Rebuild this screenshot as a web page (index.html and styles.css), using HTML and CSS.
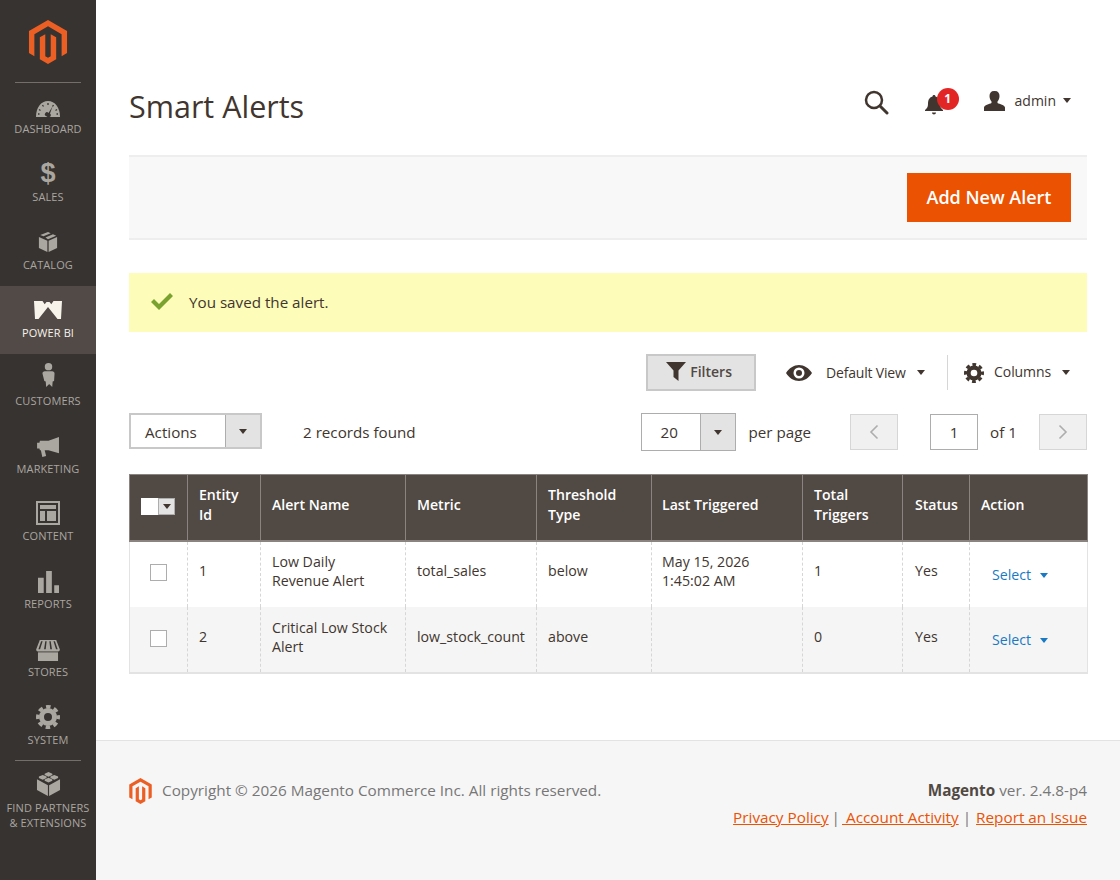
FILE: index.html
```html
<!DOCTYPE html>
<html lang="en">
  <head>
    <meta charset="UTF-8" />
    <title>Smart Alerts / Magento Admin</title>
    <link rel="stylesheet" href="styles.css">
  </head>
  <body>
    <nav class="menu">
      <a class="menu-logo" href="#">
        <svg width="40" height="44" viewBox="1.6 0 20.8 24"><path fill="#eb5f24" d="M12 24l-4.455-2.572v-12l2.97-1.715v12.001l1.485.902 1.485-.902V7.713l2.971 1.715v12L12 24zM22.391 6v12l-2.969 1.714V7.713L12 3.43 4.574 7.713v12L1.609 18V6L12 0l10.391 6z"/></svg>
      </a>
      <ul class="menu-list">
        <li class="menu-item short">
          <svg class="menu-icon" width="24" height="16" viewBox="0 0 24 16"><path d="M0 16C0 6.500 5 0 12 0s12 6.500 12 16z"/><path fill="none" stroke="#373330" stroke-width="1.300" d="M12 2v2M6.500 4l1 1.500M17.500 4l-1 1.500M3 8.500l1.500 1M21 8.500l-1.500 1M2 13h1.500M22 13h-1.500"/><path fill="#373330" d="M16.500 5.500l-4 6.500a2 2 0 1 0-2.500 3l1.500 1h2a2 2 0 0 0 .5-3.500z"/></svg>
          <span class="menu-label">Dashboard</span>
        </li>
        <li class="menu-item">
          <span class="menu-icon dollar">$</span>
          <span class="menu-label">Sales</span>
        </li>
        <li class="menu-item">
          <svg class="menu-icon" width="20" height="22" viewBox="0 0 22 24"><path d="M11 1l3 1.300-8 3.500-3.500-1.500zM16.500 3.400L20 5 11 9 8.200 7zM1 6.500l9.300 4V23L1 18.500zM21 6.500v12L11.700 23V10.500z"/></svg>
          <span class="menu-label">Catalog</span>
        </li>
        <li class="menu-item active">
          <svg class="menu-icon bi" width="28" height="18" viewBox="0 0 28 18"><path d="M0 0h8.500l2.200 3.200L12.500 1h3l1.800 2.200L19.500 0H28l-1 18h-3.500L14 6 4.500 18H1z"/></svg>
          <span class="menu-label">Power BI</span>
        </li>
        <li class="menu-item">
          <svg class="menu-icon customer" width="13" height="26" viewBox="0 0 14 27"><circle cx="7" cy="4.500" r="4"/><path d="M3 9.500h8c1.500 0 2.500 1 2.500 2.500l-.5 8-1.500.5-.5 6-3-3-.5 0-3 3-.5-6-1.500-.5L.500 12C.500 10.500 1.500 9.500 3 9.500z"/></svg>
          <span class="menu-label">Customers</span>
        </li>
        <li class="menu-item">
          <svg class="menu-icon" width="23" height="20" viewBox="0 0 24 21"><path d="M23 0v17L12 14H8l1.500 6-4 1L4 14H3l-.5-2H0V6h2.500L3 4h9z"/></svg>
          <span class="menu-label">Marketing</span>
        </li>
        <li class="menu-item short">
          <svg class="menu-icon tight" width="24" height="24" viewBox="0 0 24 24"><path fill-rule="evenodd" d="M0 0h24v24H0zM2 2v20h20V2zM4 4h16v4H4zM4 10h5v10H4zM11 10h9v10h-9z"/></svg>
          <span class="menu-label">Content</span>
        </li>
        <li class="menu-item">
          <svg class="menu-icon tight" width="21" height="22" viewBox="0 0 22 23"><path d="M0 7h6v16H0zM8.500 0h6v23h-6zM17 15h5v8h-5z"/></svg>
          <span class="menu-label">Reports</span>
        </li>
        <li class="menu-item">
          <svg class="menu-icon tight" width="26" height="21" viewBox="0 0 26 23"><path fill-rule="evenodd" d="M4 0h18l4 10.500c0 1.500-1 2-2 2H2c-1 0-2-.5-2-2zM5.500 1.500L2.500 10h1.800l2.800-8.500zM10 1.500L8.700 10h1.800l1-8.500zM14.500 1.500l1 8.500h1.800L16 1.500zM19 1.500l2.800 8.500h1.800l-3-8.500z"/><path d="M2 13.500h22V23H2z"/></svg>
          <span class="menu-label">Stores</span>
        </li>
        <li class="menu-item">
          <svg class="menu-icon gear tight" width="24" height="24" viewBox="0 0 24 24"><circle cx="12" cy="12" r="6.500" fill="none" stroke-width="5"/><circle cx="12" cy="12" r="10.200" fill="none" stroke-width="3.600" stroke-dasharray="4.500 3.510" stroke-dashoffset="2.250"/></svg>
          <span class="menu-label">System</span>
        </li>
        <li class="menu-item partners">
          <svg class="menu-icon" width="25" height="24" viewBox="0 0 26 25"><path d="M13 0l4 1.800v1.400l-4 1.800-4-1.800V1.800zM7 3l4 1.800v1.400L7 8 3 6.200V4.800zM19 3l4 1.800v1.400L19 8l-4-1.800V4.800zM13 6l4 1.800v1.400L13 11 9 9.200V7.800zM1 7.500l11.400 6.300V25L1 18.700zM25 7.500v11.200L13.600 25V13.800l3-1.600z"/></svg>
          <span class="menu-label">Find Partners<br>&amp; Extensions</span>
        </li>
      </ul>
    </nav>

    <div class="page">
      <main class="content">
        <header class="page-header">
          <h1>Smart Alerts</h1>
          <div class="header-tools">
            <svg class="search-icon" width="26" height="26" viewBox="0 0 26 26"><circle cx="11" cy="11" r="8" fill="none" stroke="#41362f" stroke-width="2.500"/><path d="M17 17l7 7" stroke="#41362f" stroke-width="3" stroke-linecap="round"/></svg>
            <div class="notice">
              <svg width="20" height="22" viewBox="0 0 20 22"><path fill="#41362f" d="M10 1c1 0 1.500.7 1.500 1.500C15 3.500 16 6.500 16 10c0 3 1 4.500 3 6v1H1v-1c2-1.500 3-3 3-6 0-3.500 1-6.500 4.500-7.500C8.500 1.700 9 1 10 1zM8 18.500h4c0 1.200-.9 2-2 2s-2-.8-2-2z"/></svg>
              <span class="badge">1</span>
            </div>
            <div class="user">
              <svg width="22" height="20" viewBox="0 0 22 20"><path fill="#41362f" d="M11 0c3 0 4.500 2 4.500 5 0 2.500-1 4.500-2 5.500v1.500c2 1 7.500 2 7.500 4.500V20H0v-3.500C0 14 5.500 13 7.500 12v-1.500c-1-1-2-3-2-5.500 0-3 1.500-5 4.500-5z"/></svg>
              <span class="user-name">admin</span>
              <span class="caret"></span>
            </div>
          </div>
        </header>

        <div class="page-actions">
          <button class="primary-btn">Add New Alert</button>
        </div>

        <div class="message">
          <svg width="22" height="17" viewBox="0 0 22 17"><path fill="#79a22e" d="M0 9l3-3 5 5L19 0l3 3L8 17z"/></svg>
          <span>You saved the alert.</span>
        </div>

        <div class="grid-tools">
          <button class="filters-btn">
            <svg width="20" height="19" viewBox="0 0 20 19"><path fill="#41362f" d="M0 0h20l-7.500 8.500V19l-5-4V8.500z"/></svg>
            Filters
          </button>
          <div class="view-switch">
            <svg width="26" height="16" viewBox="0 0 26 16"><path fill="#41362f" fill-rule="evenodd" d="M0 8c3-5 8-8 13-8s10 3 13 8c-3 5-8 8-13 8S3 13 0 8zM13 2.500a5.500 5.500 0 1 0 0 11 5.500 5.500 0 0 0 0-11zM13 5a3 3 0 1 1 0 6 3 3 0 0 1 0-6z"/></svg>
            <span class="view-label">Default View</span>
            <span class="caret"></span>
          </div>
          <div class="columns-switch">
            <svg class="gear-dark" width="20" height="20" viewBox="0 0 24 24"><circle cx="12" cy="12" r="6.500" fill="none" stroke-width="5"/><circle cx="12" cy="12" r="10.200" fill="none" stroke-width="3.600" stroke-dasharray="4.500 3.510" stroke-dashoffset="2.250"/></svg>
            <span class="columns-label">Columns</span>
            <span class="caret"></span>
          </div>
        </div>

        <div class="grid-pager">
          <div class="select actions-select">
            <span class="select-value">Actions</span>
            <span class="select-arrow"><span class="caret"></span></span>
          </div>
          <span class="records">2 records found</span>
          <div class="select size-select">
            <span class="select-value">20</span>
            <span class="select-arrow"><span class="caret"></span></span>
          </div>
          <span class="per-page">per page</span>
          <button class="page-btn prev">
            <svg width="10" height="16" viewBox="0 0 10 16"><path d="M8.500 1.500L2 8l6.500 6.500" fill="none" stroke="#adadad" stroke-width="1.600"/></svg>
          </button>
          <span class="page-input">1</span>
          <span class="page-total">of 1</span>
          <button class="page-btn next">
            <svg width="10" height="16" viewBox="0 0 10 16"><path d="M1.500 1.500L8 8l-6.500 6.500" fill="none" stroke="#adadad" stroke-width="1.600"/></svg>
          </button>
        </div>

        <table class="data-grid">
          <colgroup>
            <col class="col-check"><col class="col-id"><col class="col-name"><col class="col-metric"><col class="col-type">
            <col class="col-last"><col class="col-total"><col class="col-status"><col class="col-action">
          </colgroup>
          <thead>
            <tr>
              <th><div class="head-check"><span class="head-box"></span><span class="head-arrow"><span class="caret small"></span></span></div></th>
              <th>Entity<br>Id</th>
              <th>Alert Name</th>
              <th>Metric</th>
              <th>Threshold<br>Type</th>
              <th class="last-col">Last Triggered</th>
              <th>Total<br>Triggers</th>
              <th class="status-col">Status</th>
              <th>Action</th>
            </tr>
          </thead>
          <tbody>
            <tr>
              <td class="check-cell"><span class="checkbox"></span></td>
              <td>1</td>
              <td>Low Daily<br>Revenue Alert</td>
              <td>total_sales</td>
              <td>below</td>
              <td class="last-col">May 15, 2026<br>1:45:02 AM</td>
              <td>1</td>
              <td class="status-col">Yes</td>
              <td class="action-cell"><a href="#">Select</a><span class="caret blue"></span></td>
            </tr>
            <tr class="even">
              <td class="check-cell"><span class="checkbox"></span></td>
              <td>2</td>
              <td>Critical Low Stock<br>Alert</td>
              <td>low_stock_count</td>
              <td>above</td>
              <td class="last-col"></td>
              <td>0</td>
              <td class="status-col">Yes</td>
              <td class="action-cell"><a href="#">Select</a><span class="caret blue"></span></td>
            </tr>
          </tbody>
        </table>
      </main>

      <footer class="footer">
        <div class="copyright">
          <svg width="23" height="26" viewBox="1.6 0 20.800 24"><path fill="#eb5f24" d="M12 24l-4.455-2.572v-12l2.97-1.715v12.001l1.485.902 1.485-.902V7.713l2.971 1.715v12L12 24zM22.391 6v12l-2.969 1.714V7.713L12 3.43 4.574 7.713v12L1.609 18V6L12 0l10.391 6z"/></svg>
          <span>Copyright © 2026 Magento Commerce Inc. All rights reserved.</span>
        </div>
        <div class="footer-right">
          <div class="version"><strong>Magento</strong> ver. 2.4.8-p4</div>
          <div class="footer-links">
            <a href="#">Privacy Policy</a>
            <span class="pipe">|</span>
            <a href="#">&nbsp;Account Activity</a>
            <span class="pipe wide">|</span>
            <a href="#">Report an Issue</a>
          </div>
        </div>
      </footer>
    </div>
  </body>
</html>
```

FILE: styles.css
```css
* {
  box-sizing: border-box;
}
body {
  margin: 0;
  display: flex;
  min-height: 880px;
  font-family: "Open Sans", sans-serif;
  font-size: 14px;
  color: #41362f;
  background: #fff;
}
button {
  font-family: inherit;
  cursor: pointer;
}

/* left menu */
.menu {
  width: 96px;
  flex: none;
  background: #373330;
  color: #aaa6a0;
}
.menu-logo {
  display: block;
  margin: 0 15px;
  padding: 20px 0 18px;
  border-bottom: 1px solid #736e6a;
  text-align: center;
  height: 83px;
}
.menu-list {
  list-style: none;
  margin: 0;
  padding: 0;
}
.menu-item {
  height: 68px;
  display: flex;
  flex-direction: column;
  align-items: center;
  justify-content: flex-end;
  padding-bottom: 14px;
  font-size: 11px;
  line-height: 15px;
  text-transform: uppercase;
  text-align: center;
}
.menu-item.short {
  height: 67px;
}
.menu-icon {
  fill: #aaa6a0;
  margin-bottom: 4px;
}
.menu-icon.tight {
  margin-bottom: 3px;
}
.menu-icon.bi {
  margin-bottom: 6px;
  fill: #f7f3eb;
}
.menu-icon.customer {
  margin-bottom: 5px;
}
.menu-label {
  letter-spacing: 0.1px;
  white-space: nowrap;
}
.gear {
  stroke: #aaa6a0;
  fill: none;
}
.dollar {
  font-family: "Liberation Sans", sans-serif;
  font-size: 27px;
  line-height: 27px;
  font-weight: 700;
  margin-bottom: 2px;
}
.menu-item.active {
  background: #514a46;
  color: #f7f3eb;
}
.menu-item.partners {
  margin: -1px 15px 0;
  height: 76px;
  padding-bottom: 0;
  border-top: 1px solid #736e6a;
  justify-content: flex-start;
  padding-top: 11px;
}
.partners .menu-label {
  margin: 0 -15px;
}

/* page */
.page {
  flex: 1;
  display: flex;
  flex-direction: column;
  min-width: 0;
}
.content {
  flex: 1;
  padding: 0 33px 0 33px;
}
.page-header {
  height: 155px;
  display: flex;
  justify-content: space-between;
  align-items: flex-start;
  padding-top: 85px;
}
h1 {
  margin: 0;
  font-size: 30.5px;
  line-height: 42px;
  font-weight: 400;
  color: #41362f;
}
.header-tools {
  display: flex;
  align-items: center;
  padding-top: 3px;
  margin-right: 16px;
}
.search-icon {
  margin-top: -2px;
  margin-right: 35px;
}
.notice {
  position: relative;
  width: 20px;
  height: 24px;
  margin-top: 6px;
  margin-right: 40px;
}
.badge {
  position: absolute;
  left: 13px;
  top: -6px;
  width: 22px;
  height: 22px;
  border-radius: 50%;
  background: #e22626;
  color: #fff;
  font-size: 12px;
  font-weight: 700;
  line-height: 22px;
  text-align: center;
}
.user {
  display: flex;
  align-items: center;
  margin-top: -5px;
}
.user-name {
  margin: 0 7px 0 9px;
}
.caret {
  display: inline-block;
  width: 0;
  height: 0;
  border-style: solid;
  border-width: 5px 4.500px 0;
  border-color: #41362f transparent transparent;
}
.caret.small {
  border-width: 5px 4px 0;
}
.caret.blue {
  border-color: #1979c3 transparent transparent;
  margin-left: 9px;
  position: relative;
  top: -2px;
}

.page-actions {
  height: 85px;
  background: #f8f8f8;
  border-top: 2px solid #eeeeee;
  border-bottom: 2px solid #eeeeee;
  display: flex;
  justify-content: flex-end;
  align-items: center;
  padding-right: 16px;
}
.primary-btn {
  width: 164px;
  height: 49px;
  border: none;
  background: #eb5202;
  color: #fff;
  font-size: 18px;
  font-weight: 600;
  padding: 0 0 2px;
}

.message {
  margin-top: 33px;
  height: 59px;
  background: #fefcb9;
  display: flex;
  align-items: center;
  padding: 0 0 2px 22px;
  font-size: 15.2px;
  color: #41362f;
}
.message span {
  margin-left: 16px;
}

/* grid toolbar */
.grid-tools {
  margin-top: 22px;
  height: 37px;
  display: flex;
  align-items: center;
  justify-content: flex-end;
}
.filters-btn {
  width: 110px;
  height: 37px;
  display: flex;
  align-items: center;
  justify-content: center;
  gap: 4px;
  border: 2px solid #c8c8c8;
  background: #e3e3e3;
  color: #514943;
  font-size: 14px;
  font-weight: 600;
  padding: 0 4px 2px 0;
}
.view-switch {
  display: flex;
  align-items: center;
  margin-left: 30px;
  width: 161px;
}
.view-label {
  margin: 0 11px 0 14px;
  white-space: nowrap;
  letter-spacing: -0.2px;
}
.columns-switch {
  display: flex;
  align-items: center;
  border-left: 1px solid #d6d6d6;
  height: 35px;
  padding-left: 16px;
  padding-right: 17px;
}
.gear-dark {
  stroke: #41362f;
}
.columns-label {
  margin: -2px 11px 0 10px;
  letter-spacing: -0.1px;
}

.grid-pager {
  margin-top: 22px;
  height: 37px;
  display: flex;
  align-items: center;
  font-size: 15.2px;
}
.select {
  display: flex;
  align-self: flex-start;
  border: 1px solid #adadad;
  background: #fff;
}
.select-value {
  flex: 1;
  line-height: 36px;
}
.select-arrow {
  width: 35px;
  background: #e3e3e3;
  border-left: 1px solid #adadad;
  display: flex;
  align-items: center;
  justify-content: center;
}
.actions-select {
  width: 133px;
  height: 36px;
  border-width: 2px;
  border-color: #c8c8c8;
}
.actions-select .select-value {
  padding-left: 14px;
  line-height: 35px;
}
.records {
  margin-left: 41px;
}
.size-select {
  width: 95px;
  height: 38px;
  margin-left: auto;
}
.size-select .select-value {
  padding-left: 19px;
}
.per-page {
  margin-left: 13px;
}
.page-btn {
  width: 48px;
  height: 36px;
  border: 1px solid #d6d6d6;
  background: #f0f0f0;
  padding: 0;
  display: flex;
  align-items: center;
  justify-content: center;
}
.prev {
  margin-left: 39px;
}
.page-input {
  width: 48px;
  height: 36px;
  margin-left: 32px;
  border: 1px solid #adadad;
  text-align: center;
  line-height: 34px;
}
.page-total {
  margin-left: 12px;
  width: 49px;
}

/* data grid */
.data-grid {
  margin-top: 24px;
  width: 958px;
  table-layout: fixed;
  border-collapse: collapse;
  border-bottom: 2px solid #e3e3e3;
}
.col-check { width: 58px; }
.col-id { width: 73px; }
.col-name { width: 145px; }
.col-metric { width: 131px; }
.col-type { width: 115px; }
.col-last { width: 151px; }
.col-total { width: 100px; }
.col-status { width: 67px; }
.col-action { width: 118px; }
.data-grid th {
  height: 66px;
  background: #514943;
  color: #fff;
  font-size: 14.1px;
  font-weight: 600;
  line-height: 20px;
  text-align: left;
  padding: 0 11px 5px;
  border: 1.500px solid #8a837f;
  border-bottom-width: 2px;
}
.data-grid td {
  height: 66px;
  padding: 0 11px 7px;
  font-size: 14.2px;
  line-height: 19px;
  border-left: 1px dashed #d6d6d6;
  border-right: 1px dashed #d6d6d6;
}
.data-grid td:first-child {
  border-left: 1px solid #e3e3e3;
}
.data-grid td:last-child {
  border-right: 1px solid #e3e3e3;
}
.data-grid .last-col {
  padding-left: 10px;
}
.data-grid .status-col {
  padding-left: 12px;
  padding-right: 0;
}
.data-grid .even td {
  background: #f5f5f5;
  padding-bottom: 5px;
}
.head-check {
  display: flex;
  height: 17px;
  width: 34px;
  margin-top: 3px;
}
.head-box {
  width: 17px;
  background: #fff;
}
.head-arrow {
  width: 17px;
  background: #e3e3e3;
  border: 1px solid #adadad;
  display: flex;
  align-items: center;
  justify-content: center;
}
.check-cell {
  text-align: center;
}
.checkbox {
  display: inline-block;
  width: 17px;
  height: 17px;
  margin-top: 4px;
  border: 1px solid #adadad;
  background: #fff;
  vertical-align: middle;
}
.data-grid .action-cell,
.data-grid .even .action-cell {
  padding-left: 22px;
  padding-top: 0;
  padding-bottom: 0;
}
.action-cell a {
  color: #1979c3;
  text-decoration: none;
}

/* footer */
.footer {
  height: 140px;
  background: #f6f6f6;
  border-top: 1px solid #e3e3e3;
  padding: 37px 33px 0 33px;
  display: flex;
  justify-content: space-between;
  font-size: 15.3px;
  color: #777;
}
.copyright {
  display: flex;
  align-items: flex-start;
  gap: 10px;
}
.copyright span {
  line-height: 24px;
}
.footer-right {
  text-align: right;
  line-height: 24px;
}
.version strong {
  color: #514943;
  font-weight: 700;
}
.footer-links {
  margin-top: 3px;
  display: flex;
  justify-content: flex-end;
  white-space: pre;
}
.footer-links a {
  color: #eb5202;
}
.pipe {
  margin: 0 2px 0 3px;
}
.pipe.wide {
  margin: 0 5px 0 4px;
}
```
